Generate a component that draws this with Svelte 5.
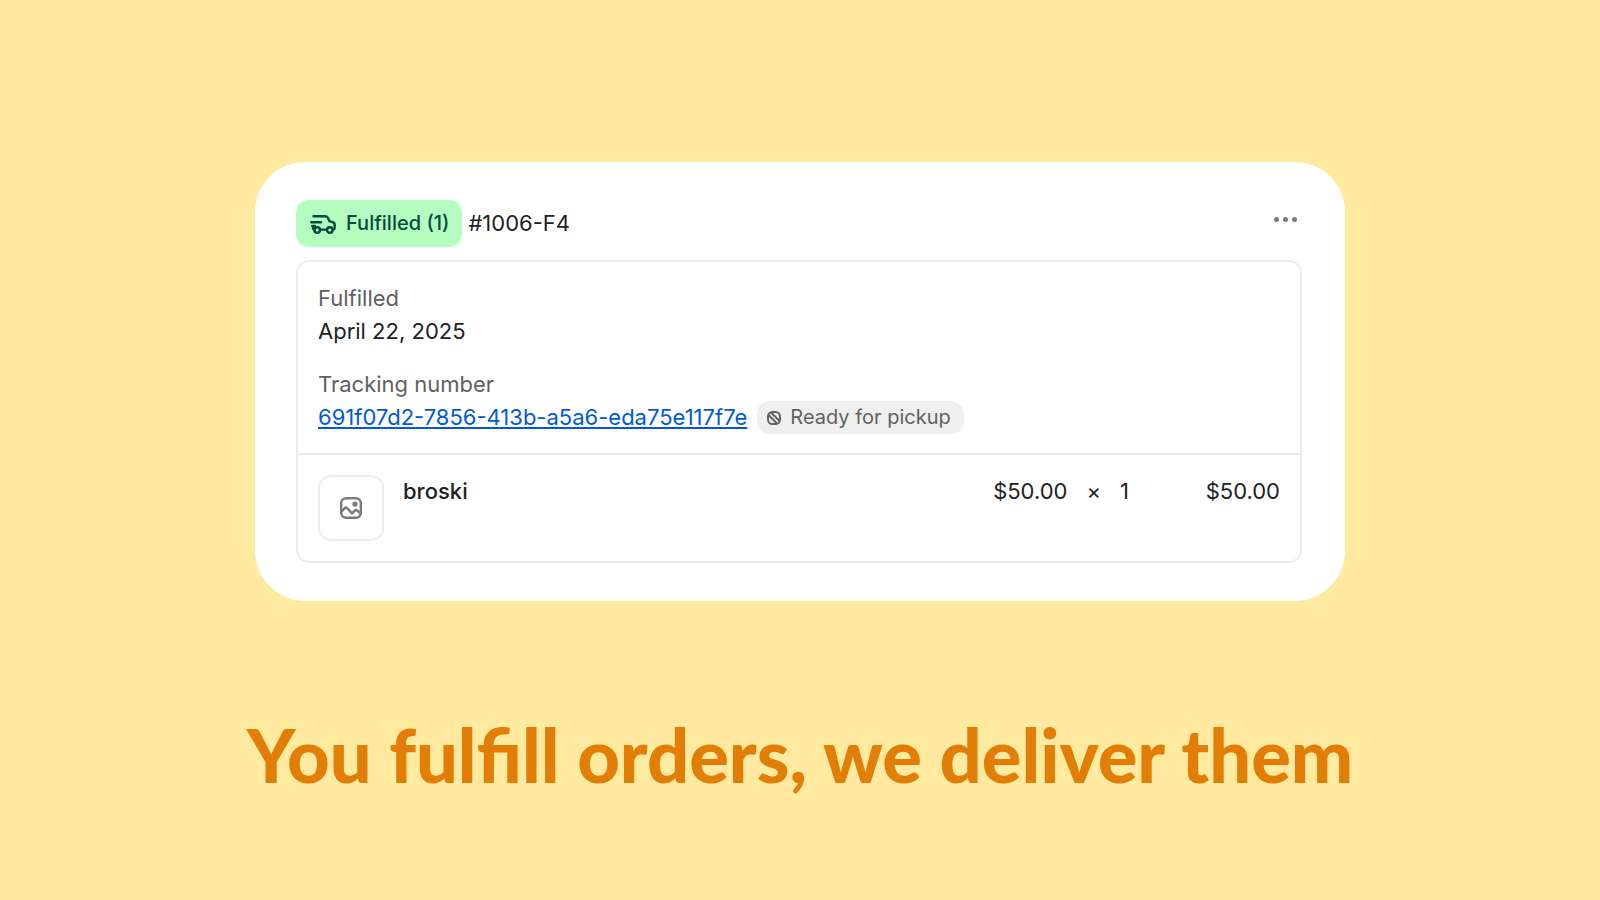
<script>
	const fulfillment = {
		id: '#1006-F4',
		date: 'April 22, 2025',
		tracking: '691f07d2-7856-413b-a5a6-eda75e117f7e',
		status: 'Ready for pickup'
	};

	const items = [{ name: 'broski', price: 50, quantity: 1 }];

	const money = (value) => `$${value.toFixed(2)}`;
</script>

<main class="slide">
	<section class="card" aria-label="Fulfillment {fulfillment.id}">
		<header class="head">
			<span class="badge">
				<svg class="truck" viewBox="0 0 26 20" width="26" height="20" aria-hidden="true">
					<path d="M3.5 2.2H15Q17 2.2 17.8 3.8L19.6 7.4L22.6 8.2Q24.7 8.9 24.7 11V13.2Q24.7 15.4 22.8 15.6M1.2 8.2H11M2.2 12H5M3 12V13.4Q3 15.4 4.4 15.6M10 15.6H17" />
					<circle cx="7.2" cy="16" r="2.8" />
					<circle cx="19.8" cy="16" r="2.8" />
				</svg>
				Fulfilled ({items.length})
			</span>
			<span>{fulfillment.id}</span>
			<button class="more" type="button" aria-label="More actions">
				<span class="dot"></span>
				<span class="dot"></span>
				<span class="dot"></span>
			</button>
		</header>

		<div class="box">
			<dl class="details">
				<div>
					<dt>Fulfilled</dt>
					<dd>{fulfillment.date}</dd>
				</div>
				<div>
					<dt>Tracking number</dt>
					<dd class="tracking">
						<a href="#tracking">{fulfillment.tracking}</a>
						<span class="status">
							<svg viewBox="0 0 14 14" width="14" height="14" aria-hidden="true">
								<rect x="1" y="1" width="12" height="12" rx="4.5" />
								<path d="M2 4.5L9.5 12M4.5 2L12 9.5" />
							</svg>
							{fulfillment.status}
						</span>
					</dd>
				</div>
			</dl>

			<ul class="items">
				{#each items as item}
					<li>
						<span class="thumb">
							<svg viewBox="0 0 22 22" width="22" height="22" aria-hidden="true">
								<rect x="1.2" y="1.2" width="19.6" height="19.6" rx="5" />
								<path d="M1.2 15L4.8 11.2Q6 10 7.2 11.2L12 16.4L14.8 13.6Q16 12.4 17.2 13.6L20.8 16.4" />
								<circle cx="15" cy="7" r="2.6" />
							</svg>
						</span>
						<span class="name">{item.name}</span>
						<span class="price">{money(item.price)}</span>
						<span class="times">×</span>
						<span class="quantity">{item.quantity}</span>
						<span class="total">{money(item.price * item.quantity)}</span>
					</li>
				{/each}
			</ul>
		</div>
	</section>

	<h1>You fulfill orders, we deliver them</h1>
</main>

<style>
	:global(body) {
		margin: 0;
		background: #ffeaa0;
	}

	.slide {
		box-sizing: border-box;
		min-height: 100vh;
		padding: 162px 24px 48px;
		display: flex;
		flex-direction: column;
		align-items: center;
		gap: 102px;
		font-family: Inter, "Liberation Sans", sans-serif;
		font-size: 22px;
		line-height: 33px;
		color: #202223;
	}

	.card {
		box-sizing: border-box;
		width: 100%;
		max-width: 1090px;
		padding: 38px 43px 38px 41px;
		border-radius: 50px;
		background: #fff;
	}

	.head {
		display: flex;
		align-items: center;
		gap: 6px;
		margin-bottom: 13px;
	}

	.badge {
		display: flex;
		align-items: center;
		gap: 10px;
		padding: 7px 13px 7px 14px;
		border-radius: 13px;
		background: #b4fec0;
		color: #014b40;
		font-size: 20px;
		font-weight: 500;
	}

	svg {
		flex: none;
		fill: none;
		stroke: currentColor;
		stroke-width: 2.4;
		stroke-linecap: round;
		stroke-linejoin: round;
	}

	.more {
		display: flex;
		align-items: center;
		justify-content: center;
		align-self: flex-start;
		gap: 4px;
		width: 34px;
		height: 38px;
		margin-left: auto;
		padding: 0;
		border: 0;
		background: none;
		color: #7a7a7a;
		cursor: pointer;
	}

	.dot {
		width: 5px;
		height: 5px;
		border-radius: 50%;
		background: currentColor;
	}

	.box {
		border: 2px solid #ededed;
		border-radius: 13px;
	}

	.details {
		display: grid;
		gap: 20px;
		margin: 0;
		padding: 20px 20px 19px;
	}

	dt {
		color: #616161;
	}

	dd {
		margin: 0;
	}

	.tracking {
		display: flex;
		flex-wrap: wrap;
		gap: 10px;
	}

	.tracking a {
		color: #005bd3;
		text-decoration-thickness: 2px;
		text-underline-offset: 2px;
	}

	.status {
		display: flex;
		align-items: center;
		gap: 9px;
		padding: 0 13px 0 10px;
		border-radius: 13px;
		background: #efefef;
		color: #616161;
		font-size: 20px;
	}

	.status svg {
		stroke-width: 2;
	}

	.items {
		list-style: none;
		margin: 0;
		padding: 0;
	}

	.items li {
		display: flex;
		gap: 19px;
		padding: 20px;
		border-top: 2px solid #ededed;
	}

	.thumb {
		box-sizing: border-box;
		display: grid;
		place-items: center;
		width: 66px;
		height: 66px;
		border: 2px solid #ededed;
		border-radius: 13px;
		color: #7a7a7a;
	}

	.thumb circle {
		fill: currentColor;
		stroke: none;
	}

	.name {
		flex: 1;
		font-weight: 500;
	}

	.total {
		min-width: 132px;
		text-align: right;
	}

	h1 {
		margin: 0;
		font-family: "Lato Black", Lato, "Open Sans", sans-serif;
		font-size: 74px;
		font-weight: 900;
		line-height: 104px;
		text-align: center;
		color: #e27d06;
	}
</style>
